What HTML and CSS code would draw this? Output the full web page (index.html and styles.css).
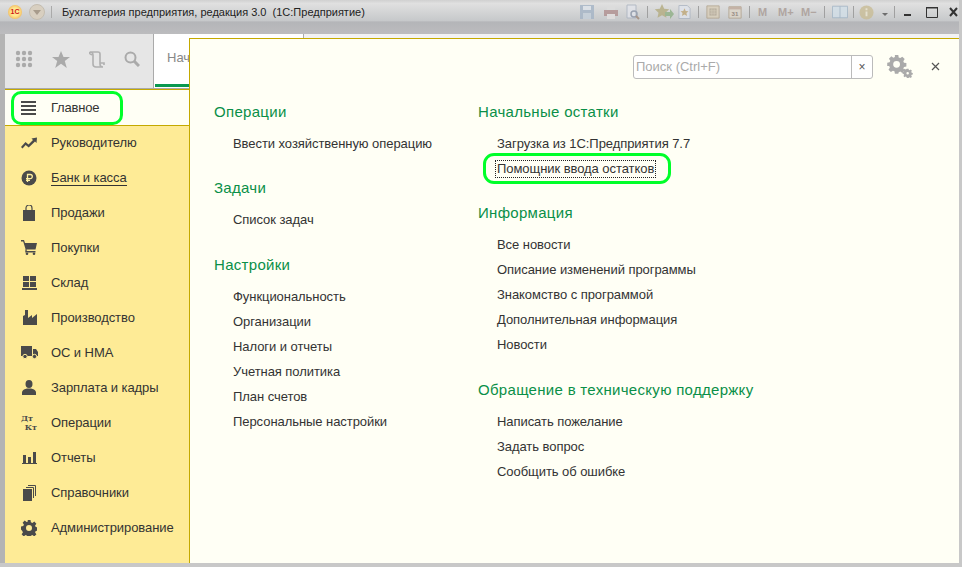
FILE: index.html
```html
<!DOCTYPE html>
<html lang="ru">
<head>
<meta charset="utf-8">
<title>Бухгалтерия предприятия</title>
<link rel="stylesheet" href="styles.css">
</head>
<body>
<div class="window">
  <header class="titlebar">
    <div class="title-left">
      <span class="logo">1С</span>
      <span class="menu-btn"><svg width="8" height="5" viewBox="0 0 8 5"><path d="M0 0h8L4 5z" fill="#a89c8c"/></svg></span>
      <span class="sep"></span>
      <span class="title-text">Бухгалтерия предприятия, редакция 3.0&nbsp; (1С:Предприятие)</span>
    </div>
    <div class="tools">
      <svg class="t-save" width="16" height="16" viewBox="0 0 16 16"><path d="M1 1h14v14H1z" fill="#a4b4c6"/><path d="M4 2h8v4H4z" fill="#dde3ea"/><path d="M4 9h8v6H4z" fill="#c4cfda"/></svg>
      <svg class="t-8" width="16" height="16" viewBox="0 0 16 16"><path d="M4 1h8v5H4z" fill="#ddd"/><path d="M1 6h14v6H1z" fill="#b08f8f"/><path d="M4 10h8v5H4z" fill="#e3dfdf"/></svg>
      <svg class="t-7" width="14" height="16" viewBox="0 0 14 16"><path d="M1 1h9v13H1z" fill="#e2e4ea" stroke="#a9b2c0"/><circle cx="8" cy="10" r="3" fill="none" stroke="#8c96a8" stroke-width="1.500"/><path d="M10 12l3 3" stroke="#a08878" stroke-width="2"/></svg>
      <i class="tool-sep t-7"></i>
      <svg class="t-6" width="20" height="18" viewBox="0 0 20 18"><path d="M8 1l2.200 4.700 5 .6-3.700 3.500 1 5-4.500-2.500-4.500 2.500 1-5L.8 6.300l5-.6z" fill="#b4ac80"/><path d="M11 9h5V6l4 5-4 5v-3h-5z" fill="#8fb086"/></svg>
      <svg class="t-4" width="13" height="16" viewBox="0 0 14 16"><path d="M1 1h9l3 3v11H1z" fill="#e0e4ec" stroke="#a9b2c0"/><path d="M7 4l1.300 2.800 3 .4-2.200 2 .6 3L7 10.700l-2.700 1.500.6-3-2.200-2 3-.4z" fill="#c0a878"/></svg>
      <i class="tool-sep t-7"></i>
      <svg class="t-7" width="14" height="16" viewBox="0 0 16 16"><path d="M1 1h14v14H1z" fill="#d8cdb8" stroke="#ab9c84"/><path d="M4 4h8v8H4z" fill="#a89c88"/><path d="M6 4v8M8 4v8M10 4v8M4 6h8M4 8h8M4 10h8" stroke="#d8cdb8" stroke-width=".7"/></svg>
      <svg class="t-8" width="14" height="16" viewBox="0 0 16 16"><path d="M1 2h14v13H1z" fill="#ddd5c8" stroke="#ab9c84"/><path d="M1 2h14v3H1z" fill="#bfa99a"/><text x="8" y="13" text-anchor="middle" class="cal">31</text></svg>
      <i class="tool-sep t-7"></i>
      <span class="mem t-8">M</span><span class="mem mem-w t-11">M+</span><span class="mem mem-w t-7">M−</span>
      <i class="tool-sep t-7"></i>
      <svg class="t-7" width="16" height="16" viewBox="0 0 18 16"><path d="M.5 1.500h17v13H.5z" fill="#d2dfe8" stroke="#9bb0c2"/><path d="M9 1.500v13" stroke="#9bb0c2"/></svg>
      <i class="tool-sep t-5"></i>
      <svg class="t-5" width="15" height="15" viewBox="0 0 16 16"><circle cx="8" cy="8" r="7.500" fill="#c9bd96"/><path d="M7 7h2v5H7zM7 3.500h2v2H7z" fill="#e9e4cf"/></svg>
      <svg class="drop" width="6" height="3" viewBox="0 0 8 4"><path d="M0 0h8L4 4z" fill="#555"/></svg>
      <i class="tool-sep t-6"></i>
      <svg class="win t-9" width="7" height="10" viewBox="0 0 7 10"><path d="M0 7h7v2H0z" fill="#333"/></svg>
      <svg class="win t-15" width="12" height="12" viewBox="0 0 12 12"><path d="M.5 1.500h11v10H.5z" fill="none" stroke="#333"/><path d="M0 1h12v1.500H0z" fill="#333"/></svg>
      <svg class="win t-11" width="9" height="10" viewBox="0 0 9 10"><path d="M1 1l7 8M8 1L1 9" stroke="#333" stroke-width="2"/></svg>
    </div>
  </header>

  <div class="workspace">
    <aside class="side">
      <div class="strip">
        <div class="strip-icons">
          <svg width="18" height="18" viewBox="0 0 18 18" fill="#aaa"><circle cx="3" cy="3" r="2.200"/><circle cx="9" cy="3" r="2.200"/><circle cx="15" cy="3" r="2.200"/><circle cx="3" cy="9" r="2.200"/><circle cx="9" cy="9" r="2.200"/><circle cx="15" cy="9" r="2.200"/><circle cx="3" cy="15" r="2.200"/><circle cx="9" cy="15" r="2.200"/><circle cx="15" cy="15" r="2.200"/></svg>
          <svg width="18" height="17" viewBox="0 0 18 17" fill="#aaa"><path d="M9 0l2.500 6H18l-5.200 4 2 7L9 12.800 3.200 17l2-7L0 6h6.500z"/></svg>
          <svg width="16" height="17" viewBox="0 0 16 17" fill="none" stroke="#b0b0b0" stroke-width="1.600"><path d="M1 1h8c1 0 2 1 2 2v10c0 2 1 3 3 3H7c-2 0-3-1-3-3V4C4 2 3 1 1 1zM1 1c-1 1 0 3 3 3M11 12h4v2"/></svg>
          <svg width="16" height="16" viewBox="0 0 16 16" fill="none" stroke="#aaa"><circle cx="6.500" cy="6.500" r="5" stroke-width="2"/><path d="M10 10l5 5" stroke-width="3"/></svg>
        </div>
        <div class="tab"><span class="tab-text">Начальная страница</span></div>
      </div>
      <a class="home">
        <svg width="15" height="14" viewBox="0 0 15 14" fill="#4a4a4a"><path d="M0 0h15v2H0zM0 4h15v2H0zM0 8h15v2H0zM0 12h15v2H0z"/></svg>
        <span>Главное</span>
        <i class="mark mark-home"></i>
      </a>
      <nav class="nav">
        <a class="nav-item"><svg width="16" height="16" viewBox="0 0 16 16" fill="#4a4a4a"><path d="M0 12l4.500-5 3 2.500L12 5l-1.500-1.500L16 2.500l-.5 5.500L14 6.500 7.700 12.500l-3-2.500L1.500 13.500z"/></svg><span>Руководителю</span></a>
        <a class="nav-item"><svg width="16" height="16" viewBox="0 0 16 16"><circle cx="8" cy="8" r="7.500" fill="#4a4a4a"/><path d="M6.500 12V4.500h2.700a2 2 0 0 1 0 4.200H5M5 10.300h4" fill="none" stroke="#fff0a0" stroke-width="1.300"/></svg><span class="under">Банк и касса</span></a>
        <a class="nav-item"><svg width="14" height="16" viewBox="0 0 14 16" fill="#4a4a4a"><path d="M1 5h12v11H1z"/><path d="M4 7V3a3 3 0 0 1 6 0v4" fill="none" stroke="#4a4a4a" stroke-width="1.200"/></svg><span>Продажи</span></a>
        <a class="nav-item"><svg width="16" height="15" viewBox="0 0 16 15" fill="#4a4a4a"><path d="M0 0h3l1 3h12l-1.500 6.500H5.500L5.800 11H14.500v1.500H4.200L4.500 9 2.200 1.500H0z"/><circle cx="6" cy="13.700" r="1.300"/><circle cx="13" cy="13.700" r="1.300"/></svg><span>Покупки</span></a>
        <a class="nav-item"><svg width="15" height="14" viewBox="0 0 15 14" fill="#4a4a4a"><path d="M1 0h6v5H1zM8 0h6v5H8zM1 6h6v5H1zM8 6h6v5H8zM0 12h15v2H0z"/></svg><span>Склад</span></a>
        <a class="nav-item"><svg width="15" height="15" viewBox="0 0 15 15" fill="#4a4a4a"><path d="M1 6V15h14V4L10 8V5L6 8V0H3v5z"/></svg><span>Производство</span></a>
        <a class="nav-item"><svg width="17" height="13" viewBox="0 0 17 13" fill="#4a4a4a"><path d="M0 0h11v10H0zM12 3h3l2 3v4h-5z"/><circle cx="4" cy="10.500" r="2.200" stroke="#feeb96"/><circle cx="13.500" cy="10.500" r="2.200" stroke="#feeb96"/></svg><span>ОС и НМА</span></a>
        <a class="nav-item"><svg width="14" height="15" viewBox="0 0 14 15" fill="#4a4a4a"><ellipse cx="7" cy="4" rx="3.500" ry="4"/><path d="M0 15v-2.500C0 10 3 9 5 8.500h4C11 9 14 10 14 12.500V15z"/></svg><span>Зарплата и кадры</span></a>
        <a class="nav-item"><span class="dk"><b>Дт</b><b class="kt">Кт</b></span><span>Операции</span></a>
        <a class="nav-item"><svg width="15" height="12" viewBox="0 0 15 12" fill="#4a4a4a"><path d="M1 3h3v8H1zM6 5h3v6H6zM11 0h3v11h-3zM0 11h15v1H0z"/></svg><span>Отчеты</span></a>
        <a class="nav-item"><svg width="13" height="16" viewBox="0 0 13 16" fill="#4a4a4a"><path d="M0 4h9v12H0z"/><path d="M3 2.500h7.500V13M5 .5h7.500V11" fill="none" stroke="#4a4a4a"/></svg><span>Справочники</span></a>
        <a class="nav-item"><svg width="16" height="16" viewBox="0 0 16 16" fill="#4a4a4a"><path fill-rule="evenodd" d="M6.500 0h3l.4 2.300 1.500.6 1.900-1.300 2.100 2.100-1.300 1.900.6 1.500 2.300.4v3l-2.300.4-.6 1.500 1.300 1.900-2.100 2.100-1.900-1.300-1.500.6-.4 2.300h-3l-.4-2.300-1.500-.6-1.900 1.300-2.100-2.100 1.300-1.900-.6-1.500L0 9.500v-3l2.300-.4.600-1.500L1.600 2.700l2.100-2.100 1.900 1.300 1.500-.6zM8 5a3 3 0 1 0 0 6 3 3 0 0 0 0-6z"/></svg><span>Администрирование</span></a>
      </nav>
    </aside>

    <div class="main">
      <div class="main-strip"><span class="main-strip-tab"></span></div>
      <main class="panel">
        <div class="panel-top">
          <div class="search"><span class="search-input">Поиск (Ctrl+F)</span><span class="search-clear">×</span></div>
          <svg class="gear" width="26" height="23" viewBox="0 0 30 27" fill="#aaa"><path fill-rule="evenodd" d="M9 0h4l.5 2.800 1.800.8 2.400-1.600 2.800 2.800-1.600 2.400.8 1.800 2.800.5v4l-2.800.5-.8 1.800 1.600 2.400-2.800 2.800-2.400-1.600-1.800.8L13 22H9l-.5-2.800-1.800-.8-2.400 1.600-2.800-2.800 1.600-2.400-.8-1.800L0 13V9l2.800-.5.800-1.800L2 4.300 4.800 1.500l2.400 1.600 1.800-.8zM11 7a4 4 0 1 0 0 8 4 4 0 0 0 0-8z"/><path fill-rule="evenodd" d="M23 16h2l.3 1.400 1.100.5 1.200-.8 1.400 1.400-.8 1.200.5 1.100 1.300.2v2l-1.300.3-.5 1.100.8 1.200-1.400 1.400-1.200-.8-1.100.5L25 27h-2l-.3-1.300-1.100-.5-1.200.8-1.400-1.400.8-1.200-.5-1.100-1.300-.3v-2l1.300-.2.500-1.100-.8-1.200 1.400-1.400 1.200.8 1.100-.5zM24 20a1.500 1.500 0 1 0 0 3 1.500 1.500 0 0 0 0-3z"/></svg>
          <svg class="close" width="9" height="9" viewBox="0 0 9 9"><path d="M1 1l7 7M8 1L1 8" stroke="#555" stroke-width="1.200"/></svg>
        </div>
        <div class="columns">
          <div class="col">
            <section class="group"><h2>Операции</h2><a class="link">Ввести хозяйственную операцию</a></section>
            <section class="group"><h2>Задачи</h2><a class="link">Список задач</a></section>
            <section class="group"><h2>Настройки</h2>
              <a class="link">Функциональность</a><a class="link">Организации</a><a class="link">Налоги и отчеты</a><a class="link">Учетная политика</a><a class="link">План счетов</a><a class="link">Персональные настройки</a>
            </section>
          </div>
          <div class="col">
            <section class="group"><h2>Начальные остатки</h2>
              <a class="link">Загрузка из 1С:Предприятия 7.7</a>
              <a class="link"><span class="focus">Помощник ввода остатков</span><i class="mark mark-link"></i></a>
            </section>
            <section class="group"><h2>Информация</h2>
              <a class="link">Все новости</a><a class="link">Описание изменений программы</a><a class="link">Знакомство с программой</a><a class="link">Дополнительная информация</a><a class="link">Новости</a>
            </section>
            <section class="group"><h2>Обращение в техническую поддержку</h2>
              <a class="link">Написать пожелание</a><a class="link">Задать вопрос</a><a class="link">Сообщить об ошибке</a>
            </section>
          </div>
        </div>
      </main>
    </div>
  </div>
</div>
</body>
</html>
```

FILE: styles.css
```css
* { box-sizing: border-box; }
html, body { margin: 0; height: 100%; }
body {
  width: 962px;
  height: 567px;
  overflow: hidden;
  background: #c8c8c8;
  font-family: "Liberation Sans", Arial, sans-serif;
  font-size: 12px;
  color: #333;
}
.window {
  width: 959px;
  height: 563px;
  display: flex;
  flex-direction: column;
  background: #fff;
  border-left: 5px solid #b4b4b4;
}
.titlebar {
  margin-left: -5px;
  height: 34px;
  flex: none;
  display: flex;
  justify-content: space-between;
  align-items: flex-start;
  padding: 3px 1px 0 8px;
  background: linear-gradient(#d0d0d0 0, #e0e0e0 10%, #c6c8ca 62%, #b4b5b8 64%, #bcbcbe 100%);
}
.title-left { display: flex; align-items: center; height: 18px; }
.logo {
  width: 14px; height: 14px; border-radius: 50%;
  background: radial-gradient(#ffe890 40%, #e89a40);
  color: #d01818; font: bold 7px "Liberation Sans", sans-serif;
  text-align: center; line-height: 14px;
}
.menu-btn {
  width: 16px; height: 16px; border-radius: 50%; margin-left: 7px;
  background: #d8cfc0; border: 1px solid #c4bdb0;
  display: flex; align-items: center; justify-content: center;
}
.sep { width: 1px; height: 12px; background: #aaa; margin: 0 10px 0 6px; }
.title-text { font-size: 11px; color: #222; white-space: nowrap; }
.tools { display: flex; align-items: center; height: 18px; }
.tools svg:not(.win), .tools .mem { opacity: .8; }
.tool-sep { width: 1px; height: 12px; background: #a0a0a0; }
.t-4 { margin-left: 4px; }
.t-5 { margin-left: 5px; }
.t-6 { margin-left: 6px; }
.t-7 { margin-left: 7px; }
.t-8 { margin-left: 8px; }
.t-9 { margin-left: 9px; }
.t-11 { margin-left: 11px; }
.t-15 { margin-left: 15px; }
.cal { font: bold 7px "Liberation Sans", sans-serif; fill: #8a7a70; }
.mem { width: 9px; font: bold 11px "Liberation Sans", sans-serif; color: #a89a94; white-space: nowrap; }
.mem-w { width: 16px; }
.drop { margin: 5px 0 0 8px; }

.workspace { flex: 1; display: flex; min-height: 0; }
.side { width: 184px; flex: none; display: flex; flex-direction: column; background: #feeb96; }
.strip { height: 55px; flex: none; display: flex; background: #fff; border-bottom: 1px solid #aaa; }
.strip-icons { width: 149px; flex: none; display: flex; align-items: center; gap: 19px; padding: 0 0 4px 10px; background: #e6e6e6; border-right: 1px solid #aaa; }
.tab { flex: 1; min-width: 0; background: #fff; overflow: hidden; display: flex; align-items: center; padding: 0 0 3px 12px; border-bottom: 3px solid #0a9850; margin: 0 0 1px 1px; }
.tab-text { color: #888; font-size: 13px; white-space: nowrap; }
.home {
  position: relative;
  height: 37px; flex: none; display: flex; align-items: center; gap: 15px;
  padding: 0 0 0 16px; background: #fffff5; border-top: 1px solid #c4a900; border-bottom: 1px solid #c4a900;
  margin-bottom: -1px;
  font-size: 13px; letter-spacing: -.2px; color: #333;
}
.nav { flex: 1; display: flex; flex-direction: column; }
.nav-item { height: 35px; flex: none; display: grid; grid-template-columns: 16px 1fr; column-gap: 14px; align-items: center; padding-left: 16px; justify-items: center; font-size: 13px; letter-spacing: -.08px; color: #333; }
.nav-item span:last-child { justify-self: start; white-space: nowrap; }
.under { border-bottom: 1px solid #333; }
.dk { display: flex; flex-direction: column; gap: 1px; line-height: 8px; font-family: "DejaVu Serif", serif; font-size: 8px; letter-spacing: 0; color: #4a4a4a; width: 16px; }
.kt { align-self: flex-end; }
.mark { position: absolute; border: 3px solid #00ff2a; pointer-events: none; }
.mark-home { left: 6px; top: 1px; width: 112px; height: 34px; border-radius: 10px; }

.main { flex: 1; min-width: 0; display: flex; flex-direction: column; }
.main-strip { height: 4px; flex: none; background: #f2f2f2; }
.main-strip-tab { display: block; width: 115px; height: 4px; background: #fff; border-right: 1px solid #aaa; }
.panel { flex: 1; min-height: 0; border-top: 1px solid #c4a900; border-left: 1px solid #c4a900; background: #fffff5; display: flex; flex-direction: column; }
.panel-top { display: flex; justify-content: flex-end; align-items: center; height: 23px; margin-top: 16px; padding-right: 19px; flex: none; }
.search { width: 240px; height: 24px; display: flex; border: 1px solid #bbb; border-radius: 3px; background: #fff; }
.search-input { flex: 1; color: #aaa; font-size: 13px; line-height: 22px; padding-left: 2px; }
.search-clear { width: 21px; border-left: 1px solid #bbb; text-align: center; line-height: 22px; color: #555; font-size: 12px; }
.gear { margin-left: 14px; }
.close { margin-left: 18px; }
.columns { display: grid; grid-template-columns: 264px 1fr; padding: 21px 0 0 24px; }
.col { display: flex; flex-direction: column; gap: 19px; }
.group { display: flex; flex-direction: column; }
.group + .group + .group { margin-top: 1px; }
h2 { margin: 0 0 7px; height: 25px; font-size: 15px; font-weight: 400; line-height: 25px; color: #0a8f48; letter-spacing: .02em; white-space: nowrap; }
.link { position: relative; height: 25px; line-height: 25px; padding-left: 19px; font-size: 13px; letter-spacing: -.06px; color: #333; white-space: nowrap; }
.focus { display: inline-block; height: 18px; line-height: 16px; margin-left: -2px; padding: 0 1px; border: 1px dotted #222; }
.mark-link { left: 5px; top: -3px; width: 188px; height: 31px; border-radius: 11px; }
```
